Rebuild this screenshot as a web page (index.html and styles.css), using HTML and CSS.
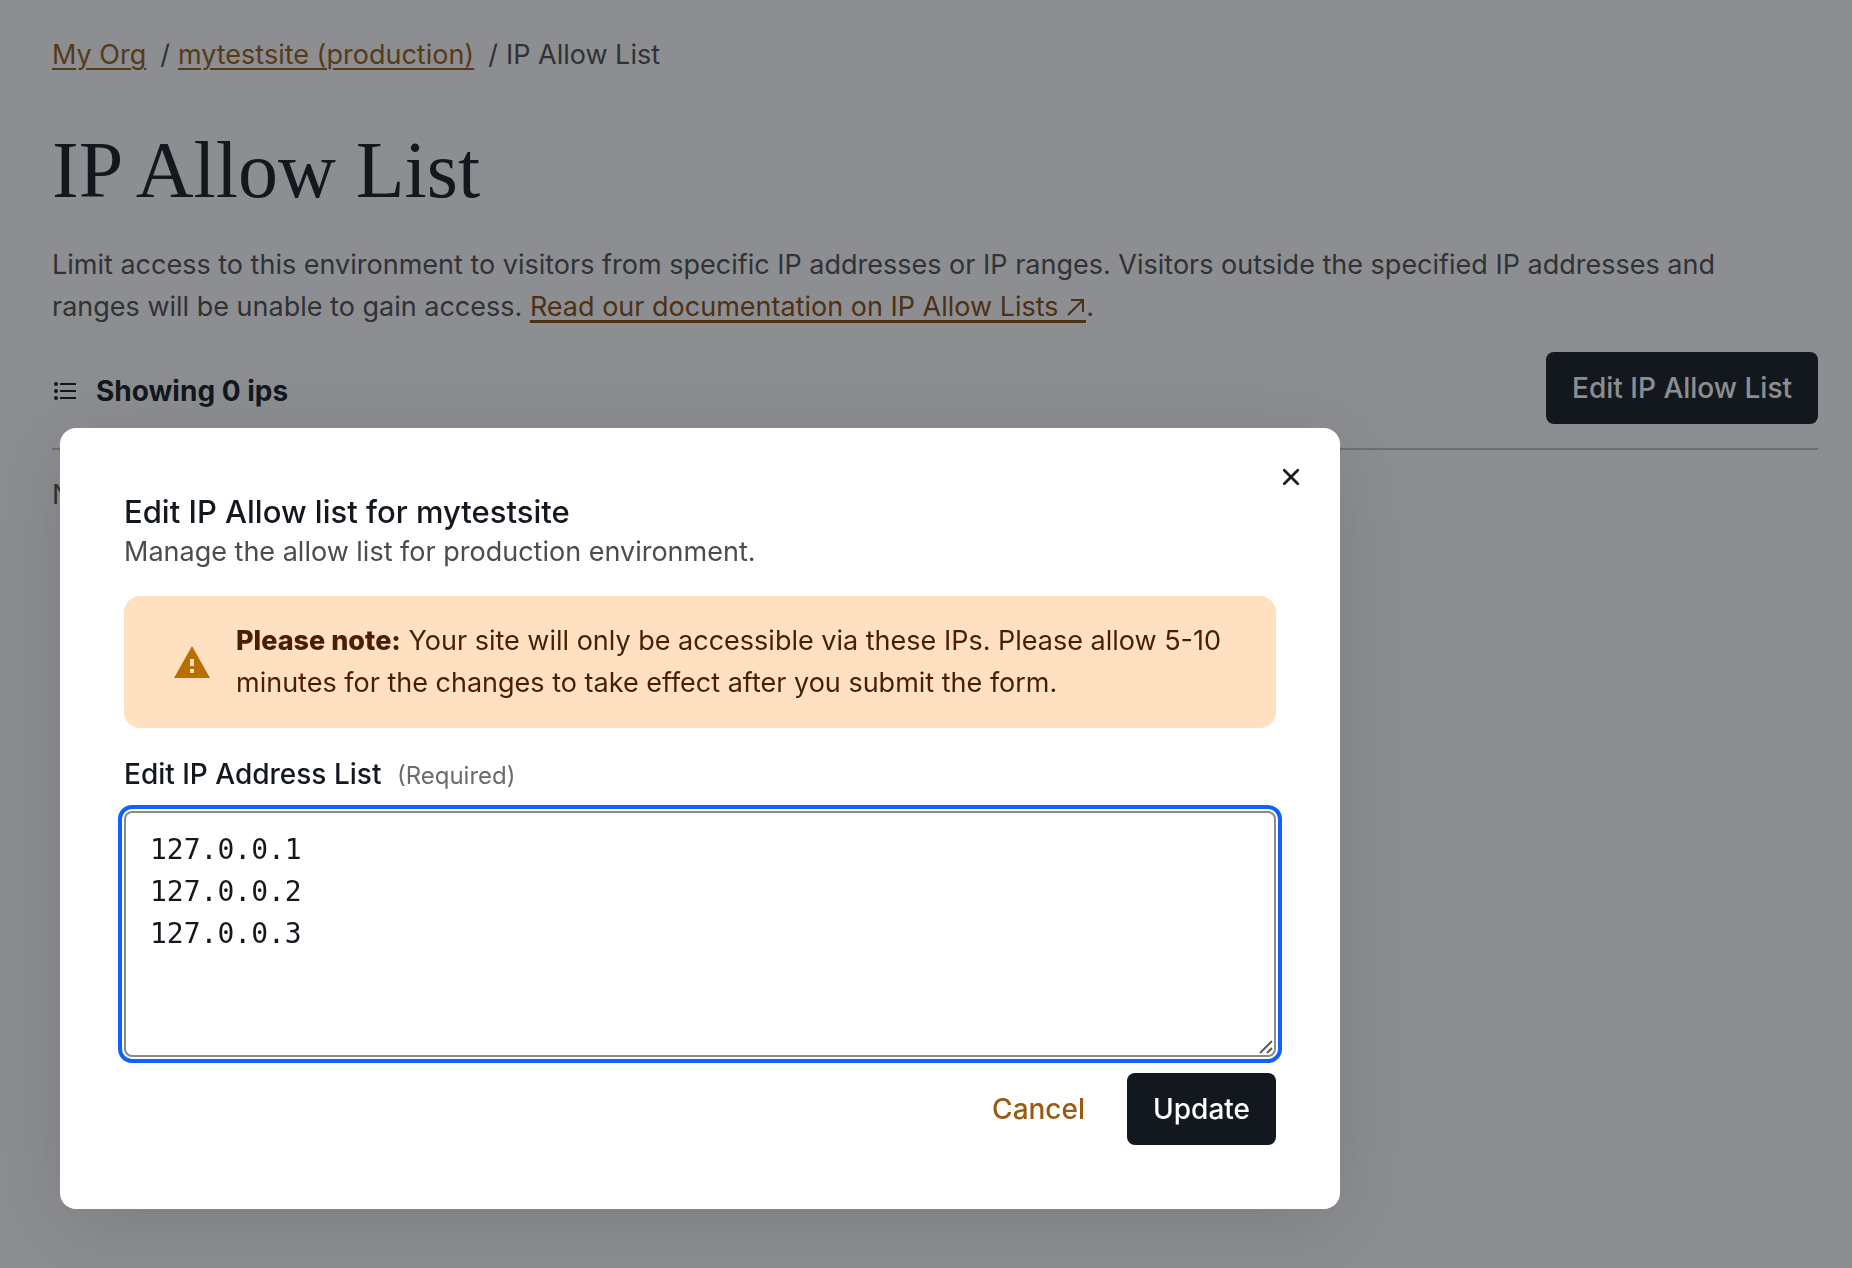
FILE: index.html
```
<!DOCTYPE html>
<html lang="en">

<head>
    <meta charset="UTF-8">
    <meta name="viewport" content="width=device-width, initial-scale=1.0">
    <title>IP Allow List</title>
    <link rel="stylesheet" href="styles.css">
</head>

<body>

    <main class="page">
        <nav class="breadcrumb" aria-label="Breadcrumb">
            <a href="#org">My Org</a>
            <span class="slash">/</span>
            <a href="#site">mytestsite (production)</a>
            <span class="slash">/</span>
            <span>IP Allow List</span>
        </nav>

        <h1>IP Allow List</h1>

        <p class="intro">Limit access to this environment to visitors from specific IP addresses or IP ranges. Visitors outside the specified IP addresses and ranges will be unable to gain access. <a href="#docs">Read our documentation on IP Allow Lists <svg class="external" viewBox="0 0 20 22" aria-hidden="true"><path d="M2 17L17 2M5 2H17V14"/></svg></a>.</p>

        <div class="toolbar">
            <div class="count">
                <svg class="list-icon" viewBox="0 0 24 20" aria-hidden="true">
                    <circle cx="2" cy="3" r="2"/>
                    <circle cx="2" cy="10" r="2"/>
                    <circle cx="2" cy="17" r="2"/>
                    <path d="M6 2H22V4H6zM6 9H22V11H6zM6 16H22V18H6z"/>
                </svg>
                <h2>Showing 0 ips</h2>
            </div>
            <button type="button" class="btn">Edit IP Allow List</button>
        </div>

        <p class="empty">No IPs found.</p>
    </main>

    <div class="overlay"></div>

    <div class="modal" role="dialog" aria-modal="true" aria-labelledby="modalTitle">
        <button type="button" class="close" aria-label="Close">
            <svg viewBox="0 0 16 16" aria-hidden="true"><path d="M2 2L14 14M14 2L2 14"/></svg>
        </button>

        <h3 id="modalTitle">Edit IP Allow list for mytestsite</h3>
        <p class="subtitle">Manage the allow list for production environment.</p>

        <div class="notice">
            <svg class="warning" viewBox="0 0 36 32" aria-hidden="true">
                <path class="triangle" d="M18 0L36 32H0z"/>
                <path class="mark" d="M16 13H20V20H16zM16 23H20V27H16z"/>
            </svg>
            <p><strong>Please note:</strong> Your site will only be accessible via these IPs. Please allow 5-10 minutes for the changes to take effect after you submit the form.</p>
        </div>

        <form>
            <label for="ips">Edit IP Address List <span class="required">(Required)</span></label>
            <div class="field">
                <textarea id="ips" required spellcheck="false">127.0.0.1
127.0.0.2
127.0.0.3</textarea>
                <svg class="grip" viewBox="0 0 14 14" aria-hidden="true"><path d="M1 13L13 1M8 13L13 8"/></svg>
            </div>
            <div class="actions">
                <button type="button" class="btn btn-link">Cancel</button>
                <button type="submit" class="btn">Update</button>
            </div>
        </form>
    </div>

</body>

</html>
```

FILE: styles.css
```
:root {
    --ink: #13181e;
    --text: #4c4c4e;
    --link: #985b10;
    --focus: #0f62fe;
}

* {
    box-sizing: border-box;
}

body {
    margin: 0;
    background: white;
    color: var(--text);
    font-family: Inter, "Liberation Sans", sans-serif;
    font-size: 27px;
    line-height: 42px;
}

h1,
h2,
h3,
p {
    margin: 0;
}

a {
    color: var(--link);
    text-decoration-thickness: 2px;
    text-underline-offset: 4px;
}

strong {
    font-weight: 800;
}

.page {
    padding: 34px 34px 34px 52px;
}

.breadcrumb {
    display: flex;
    gap: 8px;
}

.slash {
    margin-left: 6px;
}

h1 {
    margin-top: 46px;
    color: var(--ink);
    font-family: "Liberation Serif", serif;
    font-size: 80px;
    font-weight: 400;
    line-height: 96px;
}

.intro {
    margin-top: 26px;
    padding-right: 64px;
}

.intro a {
    color: #85490a;
    text-decoration-thickness: 3px;
}

/* the border carries the link underline on below the arrow */
.external {
    width: 20px;
    height: 25px;
    border-bottom: 3px solid currentColor;
    vertical-align: -7px;
    fill: none;
    stroke: currentColor;
    stroke-width: 2;
}

.toolbar {
    display: flex;
    justify-content: space-between;
    align-items: flex-start;
    margin-top: 24px;
    padding-bottom: 24px;
    border-bottom: 2px solid #c1c2c6;
}

.count {
    display: flex;
    align-items: center;
    gap: 18px;
    padding: 18px 0 0 2px;
    color: var(--ink);
}

.list-icon {
    width: 24px;
    height: 20px;
    fill: currentColor;
}

h2 {
    font-size: 28px;
    font-weight: 700;
    line-height: 42px;
}

.btn {
    padding: 15px 26px;
    border: 0;
    border-radius: 8px;
    background: var(--ink);
    color: white;
    font: inherit;
    font-size: 28px;
    font-weight: 500;
    cursor: pointer;
}

.btn-link {
    background: transparent;
    color: var(--link);
}

.empty {
    margin-top: 24px;
}

.overlay {
    position: fixed;
    inset: 0;
    background: rgba(20, 24, 31, 0.49);
}

.modal {
    position: absolute;
    top: 428px;
    left: 60px;
    width: 1280px;
    max-width: calc(100% - 120px);
    padding: 64px;
    border-radius: 16px;
    background: white;
    box-shadow: 0 16px 80px rgba(0, 0, 0, 0.12);
}

.close {
    position: absolute;
    top: 32px;
    right: 32px;
    width: 34px;
    height: 34px;
    padding: 8px;
    border: 0;
    background: none;
    cursor: pointer;
}

.close svg {
    display: block;
    width: 18px;
    height: 18px;
    stroke: #1c1c1c;
    stroke-width: 2.5;
    stroke-linecap: round;
}

h3 {
    color: var(--ink);
    font-size: 31px;
    font-weight: 500;
    line-height: 40px;
}

.subtitle {
    line-height: 40px;
}

.notice {
    display: flex;
    align-items: center;
    gap: 26px;
    margin-top: 24px;
    padding: 24px 40px 24px 50px;
    border-radius: 16px;
    background: #ffe1c2;
    color: #4a1e04;
}

.warning {
    flex: none;
    width: 36px;
    height: 32px;
}

.triangle {
    fill: #b86e00;
}

.mark {
    fill: #ffe1c2;
}

label {
    display: block;
    margin: 25px 0 16px;
    color: var(--ink);
    font-size: 28px;
    font-weight: 500;
}

.required {
    margin-left: 8px;
    color: #6b6b6b;
    font-size: 24px;
    font-weight: 400;
    line-height: 1;
}

.field {
    position: relative;
}

textarea {
    display: block;
    width: 100%;
    height: 246px;
    padding: 16px 24px;
    border: 2px solid #8c8c86;
    border-radius: 8px;
    outline: 4px solid var(--focus);
    outline-offset: 2px;
    color: var(--ink);
    font: 28px/42px "DejaVu Sans Mono", monospace;
    resize: none;
}

.grip {
    position: absolute;
    right: 3px;
    bottom: 3px;
    width: 14px;
    height: 14px;
    stroke: #5c5c5c;
    stroke-width: 2;
}

.actions {
    display: flex;
    justify-content: flex-end;
    gap: 16px;
    margin-top: 16px;
}
```
